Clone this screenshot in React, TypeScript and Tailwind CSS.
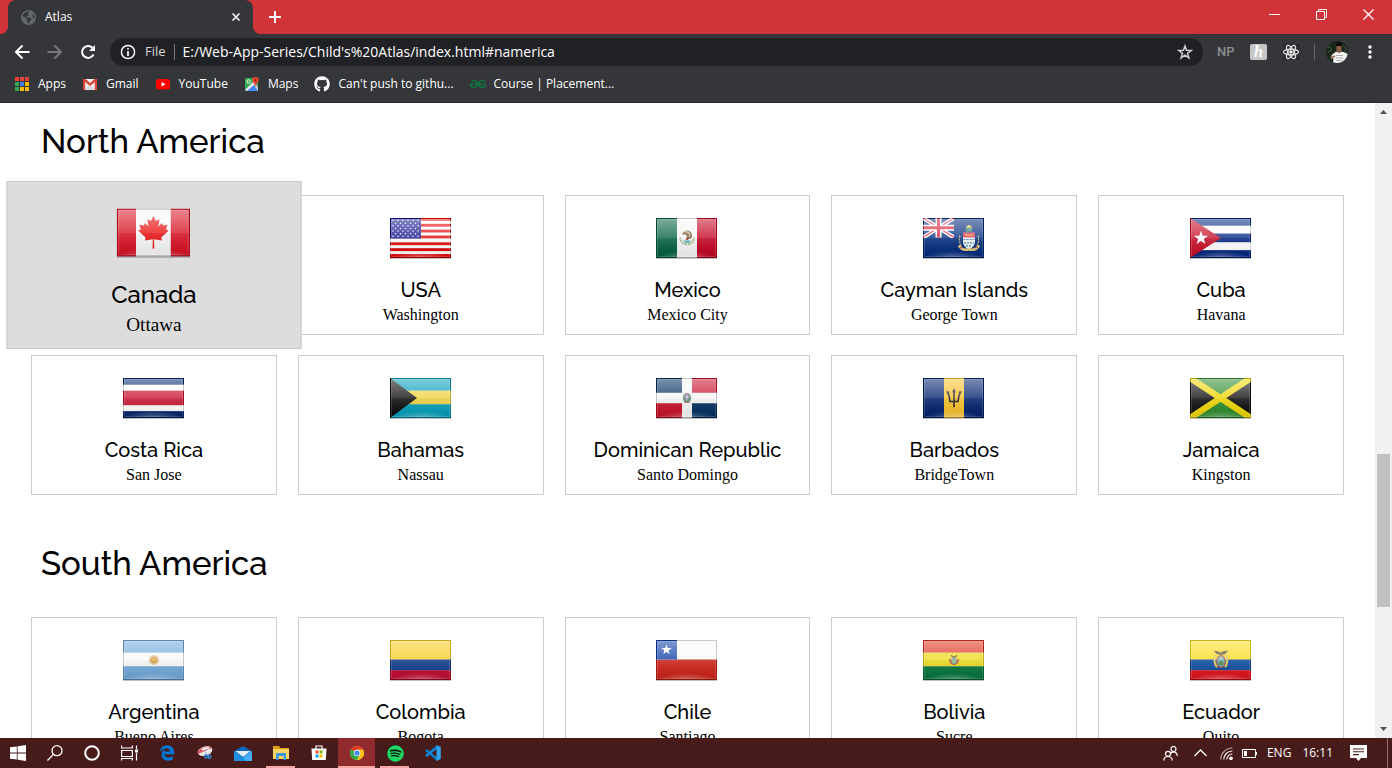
import React, { useId } from "react";
import { FaEarthAmericas, FaEdgeLegacy, FaGithub, FaReact, FaSpotify } from "react-icons/fa6";
import { SiGeeksforgeeks } from "react-icons/si";

const STAR = "M0,-1 L0.235,-0.324 L0.951,-0.309 L0.38,0.124 L0.588,0.809 L0,0.4 L-0.588,0.809 L-0.38,0.124 L-0.951,-0.309 L-0.235,-0.324Z";

function Bands({ colors, heights }: { colors: string[]; heights: number[] }) {
  let y = 0;
  return (
    <>
      {colors.map((c, i) => {
        const top = y;
        y += heights[i];
        return <rect key={i} x="0" y={top} width="61" height={heights[i]} fill={c} />;
      })}
    </>
  );
}

function Columns({ colors, widths }: { colors: string[]; widths: number[] }) {
  let x = 0;
  return (
    <>
      {colors.map((c, i) => {
        const left = x;
        x += widths[i];
        return <rect key={i} x={left} y="0" width={widths[i]} height="41" fill={c} />;
      })}
    </>
  );
}

const flags: Record<string, React.ReactNode> = {
  Canada: (
    <>
      <Columns colors={["#d80f22", "#f7f7f7", "#d80f22"]} widths={[16, 29, 16]} />
      <path
        fill="#ea1111"
        d="M30.5 6.5 L32.6 10.6 L35.6 9.2 L34.6 15.2 L37.6 12.4 L38.4 14.4 L42.2 13.8 L41 17.6 L43.2 19 L37 24.6 L37.6 27.2 L31 26.2 L31.2 34 H29.8 L30 26.2 L23.4 27.2 L24 24.6 L17.8 19 L20 17.6 L18.8 13.8 L22.6 14.4 L23.4 12.4 L26.4 15.2 L25.4 9.2 L28.4 10.6Z"
      />
    </>
  ),
  USA: (
    <>
      <Bands
        colors={["#e60000", "#fff", "#e60000", "#fff", "#e60000", "#fff", "#e60000", "#fff", "#e60000", "#fff", "#e60000", "#fff", "#e60000"]}
        heights={[3, 3, 3, 3, 3, 3, 3, 4, 3, 3, 3, 3, 4]}
      />
      <rect width="31" height="21" fill="#12128f" />
      {[0, 1, 2, 3, 4, 5, 6].map((r) =>
        [0, 1, 2, 3, 4, 5].map((c) =>
          r % 2 === 1 && c === 5 ? null : (
            <circle key={`${r}-${c}`} cx={3 + c * 5 + (r % 2 ? 2.5 : 0)} cy={2.6 + r * 2.7} r="0.75" fill="#fff" />
          ),
        ),
      )}
    </>
  ),
  Mexico: (
    <>
      <Columns colors={["#005f3c", "#f5f5f5", "#c2001f"]} widths={[21, 20, 20]} />
      <path d="M24 20 Q25 27 31 27 Q37 27 38 20" fill="none" stroke="#8ba66a" strokeWidth="1.6" strokeDasharray="1.6 0.7" />
      <path d="M26 17 Q28 12 33 13 Q37 15 36 20 Q33 23 30 21 Q32 18 29 17Z" fill="#7d5a35" />
      <path d="M29 14 Q34 14 34 19" fill="none" stroke="#c9b48c" strokeWidth="1.2" />
      <path d="M27 23 H35 L33 25.5 H29Z" fill="#55b5bd" />
      <circle cx="31" cy="21.5" r="1.2" fill="#b33c2c" />
    </>
  ),
  "Cayman Islands": (
    <>
      <rect width="61" height="41" fill="#00297b" />
      <path d="M0 0 L31 20 M31 0 L0 20" stroke="#fff" strokeWidth="4" />
      <path d="M0 0 L31 20 M31 0 L0 20" stroke="#d8213b" strokeWidth="1.2" />
      <path d="M15.5 0 V20 M0 10 H31" stroke="#fff" strokeWidth="6" />
      <path d="M15.5 0 V20 M0 10 H31" stroke="#d8213b" strokeWidth="3" />
      <rect x="31" width="30" height="41" fill="#00297b" />
      <rect y="20.5" width="32" height="21" fill="#00297b" />
      <path d="M42.5 10 Q46 4.500 49.5 10Z" fill="#f0d25c" />
      <rect x="43" y="10" width="6" height="4" fill="#35846a" />
      <path d="M40 15 H52 V25 Q51 30 46 32 Q41 30 40 25Z" fill="#f4f4f4" />
      <path d="M40 15 H52 V20 H40Z" fill="#d8314a" />
      <path d="M42 17.5 H50" stroke="#f0c842" />
      <path d="M40.500 22 H51.5 M41 25.500 H51 M43 28.5 H49" stroke="#3d84b8" strokeWidth="1.2" strokeDasharray="2 1" />
      <path d="M37 18 Q35.500 24 38 28 M55 18 Q56.500 24 54 28" fill="none" stroke="#d9bd74" strokeWidth="1.200" strokeDasharray="2 1" />
      <path d="M36 28 Q39 34 46 32 Q53 34 56 28" fill="none" stroke="#eacb78" strokeWidth="2.6" />
      <path d="M37 30.500 h3 M52 30.500 h3" stroke="#c53b3b" />
    </>
  ),
  Cuba: (
    <>
      <Bands colors={["#00237f", "#fff", "#00237f", "#fff", "#00237f"]} heights={[8, 8, 9, 8, 8]} />
      <path d="M0 0 L31 20.500 L0 41Z" fill="#c60c26" />
      <path d={STAR} transform="translate(11 20.5) scale(7.5)" fill="#fff" />
    </>
  ),
  "Costa Rica": <Bands colors={["#00246b", "#fff", "#c8102e", "#fff", "#00246b"]} heights={[7, 6, 15, 6, 7]} />,
  Bahamas: (
    <>
      <Bands colors={["#009db8", "#eed13c", "#009db8"]} heights={[13, 14, 14]} />
      <path d="M0 0 L27 20.500 L0 41Z" fill="#0a0a0a" />
    </>
  ),
  "Dominican Republic": (
    <>
      <rect width="61" height="41" fill="#f5f5f5" />
      <path d="M0 0 H26 V15 H0Z M36 26 H61 V41 H36Z" fill="#002d5e" />
      <path d="M36 0 H61 V15 H36Z M0 26 H26 V41 H0Z" fill="#c60c26" />
      <ellipse cx="31" cy="20.5" rx="4.200" ry="5" fill="#5f8a70" />
      <path d="M29 17 h4 v4 q-2 3 -4 0z" fill="#6c6f9c" />
      <path d="M31 17 v6 M29 19.500 h4" stroke="#fff" strokeWidth="0.6" />
      <path d="M28.500 25 h5 M29 16 h4" stroke="#c55" />
    </>
  ),
  Barbados: (
    <>
      <Columns colors={["#00206b", "#f7bf28", "#00206b"]} widths={[21, 20, 20]} />
      <path
        d="M31 12 V30 M24.500 14 Q26.500 18 27 24 H35 Q35.500 18 37.5 14"
        fill="none"
        stroke="#171717"
        strokeWidth="1.6"
      />
      <path d="M31 10.500 L32.800 14.500 H29.200Z M23 13.500 L26.500 14 L25 17Z M39 13.500 L35.5 14 L37 17Z" fill="#171717" />
    </>
  ),
  Jamaica: (
    <>
      <rect width="61" height="41" fill="#0b0b0b" />
      <path d="M0 0 H61 L30.5 20.500Z M0 41 H61 L30.5 20.500Z" fill="#2b8a2b" />
      <path d="M0 0 L61 41 M61 0 L0 41" stroke="#efd600" strokeWidth="6.500" />
    </>
  ),
  Argentina: (
    <>
      <Bands colors={["#6fa7da", "#fafafa", "#6fa7da"]} heights={[13, 14, 14]} />
      <circle cx="31" cy="20.5" r="4.200" fill="none" stroke="#dcae6a" strokeWidth="2" strokeOpacity="0.700" />
      <circle cx="31" cy="20.5" r="3" fill="#e0a83e" stroke="#b98236" strokeWidth="0.6" />
    </>
  ),
  Colombia: <Bands colors={["#f8cb1c", "#0c3a8c", "#c0082d"]} heights={[20, 11, 10]} />,
  Chile: (
    <>
      <Bands colors={["#fafafa", "#cc1f14"]} heights={[20, 21]} />
      <rect width="21" height="20" fill="#0a3ba5" />
      <path d={STAR} transform="translate(10.5 10) scale(5.5)" fill="#fff" />
    </>
  ),
  Bolivia: (
    <>
      <Bands colors={["#dc2b18", "#ecd91c", "#007238"]} heights={[13, 14, 14]} />
      <path d="M26 19 Q26 25.500 31 25.500 Q36 25.500 36 19 L34 20 L31 17.500 L28 20Z" fill="#b84a33" />
      <ellipse cx="31" cy="21.500" rx="2.800" ry="3.200" fill="#6fb0a0" />
      <path d="M28 16 L31 18 L34 16" fill="none" stroke="#4b4236" strokeWidth="1.2" />
      <path d="M29.500 22 h3" stroke="#e0c23c" />
    </>
  ),
  Ecuador: (
    <>
      <Bands colors={["#fbdc16", "#0a4a9c", "#e0101a"]} heights={[20, 11, 10]} />
      <path d="M24 11 Q28 10.500 30.500 13 Q33 10.500 38 11 Q35.500 15.500 31 15 Q26.500 15.500 24 11Z" fill="#4f4334" />
      <path d="M26 15 Q22.500 22 27 28 M36 15 Q39 22 35 28" fill="none" stroke="#dccb5a" strokeWidth="2" />
      <ellipse cx="31" cy="22" rx="4.200" ry="6" fill="#69b7d0" stroke="#b0503c" strokeWidth="1.2" />
      <path d="M28 23 Q31 19 34 23 L33 26 H29Z" fill="#4d8a4c" />
      <circle cx="31" cy="18.500" r="1.100" fill="#f0cf3a" />
    </>
  ),
};

function Flag({ country }: { country: string }) {
  const id = useId();
  return (
    <svg viewBox="-1 -12 64 64" className="mx-auto block size-16" role="img" aria-label={`Flag of ${country}`}>
      <defs>
        <linearGradient id={`${id}g`} x1="0" y1="0" x2="0" y2="1">
          <stop offset="0" stopColor="#fff" stopOpacity="0.48" />
          <stop offset="0.5" stopColor="#fff" stopOpacity="0.22" />
          <stop offset="0.51" stopColor="#ddd" stopOpacity="0.18" />
          <stop offset="0.75" stopColor="#888" stopOpacity="0.1" />
          <stop offset="1" stopColor="#000" stopOpacity="0.1" />
        </linearGradient>
        <radialGradient id={`${id}r`} cx="0.5" cy="1" r="0.5" gradientTransform="translate(0 0.7) scale(1 0.3)">
          <stop offset="0" stopColor="#fff" stopOpacity="0.3" />
          <stop offset="1" stopColor="#fff" stopOpacity="0" />
        </radialGradient>
        <clipPath id={`${id}c`}>
          <rect width="61" height="41" />
        </clipPath>
      </defs>
      <g transform="scale(1 0.9756)">
        <rect x="0" y="1" width="61" height="41" fill="#000" opacity="0.25" />
        <g clipPath={`url(#${id}c)`}>
          {flags[country]}
          <rect x="1" y="1" width="59" height="39" fill={`url(#${id}g)`} />
          <rect x="1" y="1" width="59" height="39" fill={`url(#${id}r)`} />
          <rect x="1.500" y="1.500" width="58" height="38" fill="none" stroke="#fff" strokeOpacity="0.15" />
          <rect x="0.500" y="0.500" width="60" height="40" fill="none" stroke="#000" strokeOpacity="0.2" />
          <rect y="40" width="61" height="1" fill="#000" opacity="0.2" />
        </g>
      </g>
    </svg>
  );
}

const regions = [
  {
    id: "namerica",
    name: "North America",
    countries: [
      ["Canada", "Ottawa"],
      ["USA", "Washington"],
      ["Mexico", "Mexico City"],
      ["Cayman Islands", "George Town"],
      ["Cuba", "Havana"],
      ["Costa Rica", "San Jose"],
      ["Bahamas", "Nassau"],
      ["Dominican Republic", "Santo Domingo"],
      ["Barbados", "BridgeTown"],
      ["Jamaica", "Kingston"],
    ],
  },
  {
    id: "samerica",
    name: "South America",
    countries: [
      ["Argentina", "Bueno Aires"],
      ["Colombia", "Bogota"],
      ["Chile", "Santiago"],
      ["Bolivia", "Sucre"],
      ["Ecuador", "Quito"],
    ],
  },
];

function CountryCard({ name, capital, active }: { name: string; capital: string; active: boolean }) {
  return (
    <article
      className={
        "border border-[#cccccc] pt-[10px] pb-[7px] text-center text-black " +
        (active ? "relative z-10 scale-120 bg-[#dddddd]" : "bg-white")
      }
    >
      <Flag country={name} />
      <h2 className="mt-2 font-['Raleway','Inter',sans-serif] text-xl leading-6 font-medium whitespace-nowrap">{name}</h2>
      <p className="mt-px font-['Liberation_Serif',serif] text-base leading-6">{capital}</p>
    </article>
  );
}

function TabStrip() {
  return (
    <div className="flex h-[34px] items-stretch bg-[#d13438] text-white">
      <span className="w-2 bg-[radial-gradient(circle_at_0_0,transparent_8px,#35363a_8px)] bg-[length:8px_8px] bg-bottom bg-no-repeat" />
      <div className="flex w-[245px] items-center rounded-t-lg bg-[#35363a] pr-[9px] pl-[13px]">
        <FaEarthAmericas className="size-[15px] text-[#63676b]" />
        <span className="ml-[9px] flex-1 text-xs">Atlas</span>
        <button aria-label="Close tab" className="grid size-4 place-items-center">
          <svg viewBox="0 0 8 8" className="size-2" stroke="#fff" strokeWidth="1.500">
            <path d="M0.500 0.500 L7.500 7.500 M7.500 0.500 L0.500 7.500" />
          </svg>
        </button>
      </div>
      <span className="w-2 bg-[radial-gradient(circle_at_100%_0,transparent_8px,#35363a_8px)] bg-[length:8px_8px] bg-bottom bg-no-repeat" />
      <button aria-label="New tab" className="grid w-7 place-items-center">
        <svg viewBox="0 0 12 12" className="size-3" stroke="#fff" strokeWidth="2">
          <path d="M6 0 V12 M0 6 H12" />
        </svg>
      </button>
      <div className="ml-auto flex h-[29px]">
        <button aria-label="Minimize" className="grid w-[47px] place-items-center">
          <svg viewBox="0 0 11 11" className="size-[11px]" stroke="#fff">
            <path d="M0 5.500 H11" />
          </svg>
        </button>
        <button aria-label="Restore" className="grid w-[47px] place-items-center">
          <svg viewBox="0 0 11 11" className="size-[11px]" stroke="#fff" fill="none">
            <path d="M0.500 2.500 H8.500 V10.500 H0.500Z M2.500 2 V0.500 H10.500 V8.500 H9" />
          </svg>
        </button>
        <button aria-label="Close" className="grid w-[47px] place-items-center">
          <svg viewBox="0 0 11 11" className="size-[11px]" stroke="#fff" strokeWidth="1.200">
            <path d="M0.500 0.500 L10.500 10.500 M10.500 0.500 L0.500 10.500" />
          </svg>
        </button>
      </div>
    </div>
  );
}

function Toolbar() {
  return (
    <div className="flex h-9 items-center text-white">
      <button aria-label="Back" className="ml-[14px] grid size-4 place-items-center">
        <svg viewBox="0 0 16 16" className="size-4" fill="none" stroke="#fff" strokeWidth="2">
          <path d="M15.500 8 H2 M8.500 1.500 L2 8 L8.500 14.500" />
        </svg>
      </button>
      <button aria-label="Forward" className="ml-[17px] grid size-4 place-items-center">
        <svg viewBox="0 0 16 16" className="size-4" fill="none" stroke="#77787b" strokeWidth="2">
          <path d="M0.500 8 H14 M7.500 1.500 L14 8 L7.500 14.500" />
        </svg>
      </button>
      <button aria-label="Reload" className="ml-[17px] grid size-4 place-items-center">
        <svg viewBox="0 0 16 16" className="size-4" fill="none" stroke="#fff" strokeWidth="2">
          <path d="M13.500 10.500 A6 6 0 1 1 12.500 3.800" />
          <path d="M15 1 V7 H9Z" fill="#fff" stroke="none" />
        </svg>
      </button>
      <div className="ml-[14px] flex h-7 flex-1 items-center rounded-full bg-[#202124] pr-[10px] pl-[10px]">
        <svg viewBox="0 0 16 16" className="size-4" fill="none" stroke="#fff" strokeWidth="1.500">
          <circle cx="8" cy="8" r="6.600" />
          <path d="M8 7 V12 M8 4 V5.600" strokeWidth="1.700" />
        </svg>
        <label htmlFor="address" className="ml-[9px] text-[13px] text-[#d5d6d8]">File</label>
        <span className="mx-2 h-4 w-px bg-[#77787b]" />
        <input
          id="address"
          className="min-w-0 flex-1 bg-transparent text-sm text-white outline-none"
          defaultValue="E:/Web-App-Series/Child's%20Atlas/index.html#namerica"
        />
        <button aria-label="Bookmark this page">
          <svg viewBox="0 0 16 16" className="size-4" fill="none" stroke="#d0d1d3" strokeWidth="1.500">
            <path d={STAR} transform="translate(8 8.5) scale(6.6)" strokeWidth="0.220" />
          </svg>
        </button>
      </div>
      <button className="ml-[14px] w-[17px] font-['Roboto',sans-serif] text-[13px] font-medium text-[#8d8e90]">NP</button>
      <button aria-label="Honey" className="ml-4 grid h-4 w-[17px] place-items-center rounded-xs bg-[#c6c6c6] font-['Liberation_Serif',serif] text-base leading-none font-bold text-white italic">h</button>
      <button aria-label="React Developer Tools" className="ml-4 grid size-4 place-items-center bg-[#292a2d]">
        <FaReact className="size-4 stroke-white stroke-[14px] text-white" />
      </button>
      <span className="ml-[15px] h-4 w-px bg-[#66676a]" />
      <button aria-label="Profile" className="ml-[11px]">
        <svg viewBox="0 0 22 22" className="size-[22px] rounded-full">
          <rect width="22" height="22" fill="#1a2619" />
          <path d="M1 5 l5 3 M2 11 l4 -2 M17 4 l4 5 M4 16 l3 -4 M18 9 l3 3" stroke="#496245" strokeWidth="1" />
          <path d="M10.500 5 h5 v5 l-2.500 2.500 l-2.500 -2.500z" fill="#8a5d45" />
          <path d="M10 5 Q10 1.500 13 1.500 Q16 1.500 16 5 H10Z" fill="#0c0b0b" />
          <path d="M6 14 L10 10.500 L13 12 L16 10.500 L22 13 L19 22 H7 L7.500 17 L5 18Z" fill="#f4f4f4" />
          <path d="M10 14.500 h7 M9.500 17 h8 M10 19.500 h6" stroke="#a8a8a8" strokeWidth="0.900" />
          <path d="M5 17 l4 -2" stroke="#a06b52" strokeWidth="1.500" />
        </svg>
      </button>
      <button aria-label="Menu" className="mr-[14px] ml-[14px] grid h-4 w-4 place-items-center">
        <svg viewBox="0 0 4 14" className="h-[14px] w-1" fill="#fff">
          <circle cx="2" cy="2" r="1.700" />
          <circle cx="2" cy="7" r="1.700" />
          <circle cx="2" cy="12" r="1.700" />
        </svg>
      </button>
    </div>
  );
}

const bookmarks = [
  {
    label: "Apps",
    icon: (
      <svg viewBox="0 0 16 16" className="size-4">
        {["#ea4335", "#ea4335", "#ea4335", "#34a853", "#4285f4", "#fbbc05", "#34a853", "#fbbc05", "#fbbc05"].map((c, i) => (
          <rect key={i} x={1 + (i % 3) * 5} y={1 + Math.floor(i / 3) * 5} width="4" height="4" fill={c} />
        ))}
      </svg>
    ),
  },
  {
    label: "Gmail",
    icon: (
      <svg viewBox="0 0 16 16" className="size-4">
        <rect x="1" y="3" width="14" height="11" fill="#f1f1f1" />
        <path d="M3 13.500 L8 8.500 L13 13.500Z" fill="#d8d8d8" />
        <path d="M1 3 H3.500 L8 7 L12.500 3 H15 V14 H12.800 V6 L8 10 L3.200 6 V14 H1Z" fill="#db4437" />
      </svg>
    ),
  },
  {
    label: "YouTube",
    icon: (
      <svg viewBox="0 0 16 16" className="size-4">
        <rect x="1" y="3" width="14" height="10.500" rx="2.500" fill="#f00" />
        <path d="M6.500 6 L10.500 8.250 L6.500 10.500Z" fill="#fff" />
      </svg>
    ),
  },
  {
    label: "Maps",
    icon: (
      <svg viewBox="0 0 16 16" className="size-4">
        <rect x="1" y="2" width="13" height="13" rx="1" fill="#34a853" />
        <path d="M2 15 L9 8 L14 13 V15Z" fill="#4285f4" />
        <path d="M1 14 L10 5 L12 7 L3 15Z" fill="#ececec" />
        <path d="M9 8 L11 7 L14 11 V15Z" fill="#c8c8c8" />
        <circle cx="4.500" cy="5.500" r="1.700" fill="none" stroke="#fff" />
        <path d="M11.500 1 A3.200 3.200 0 0 1 14.700 4.300 C14.700 6.500 11.800 7.500 11.500 11 C11.200 7.500 8.300 6.500 8.300 4.300 A3.200 3.200 0 0 1 11.500 1Z" fill="#ea4335" />
        <circle cx="11.500" cy="4.200" r="1.100" fill="#8c1d14" />
      </svg>
    ),
  },
  { label: "Can't push to githu...", icon: <FaGithub className="size-4 text-white" /> },
  { label: "Course | Placement...", icon: <SiGeeksforgeeks className="size-4 text-[#0f7a40]" /> },
];

function Scrollbar() {
  return (
    <div className="flex w-[17px] shrink-0 flex-col items-center bg-[#f1f1f1]" aria-hidden="true">
      <svg viewBox="0 0 17 17" className="size-[17px]" fill="#505050">
        <path d="M5 11 L8.500 7 L12 11Z" />
      </svg>
      <div className="flex-[334]" />
      <div className="h-[153px] w-[13px] bg-[#c1c1c1]" />
      <div className="flex-[114]" />
      <svg viewBox="0 0 17 17" className="size-[17px]" fill="#505050">
        <path d="M5 6 H12 L8.500 10Z" />
      </svg>
    </div>
  );
}

const systemItems = [
  {
    label: "Start",
    icon: (
      <svg viewBox="0 0 16 16" className="size-4" fill="#fff">
        <path d="M0 2.300 L6.800 1.400 V7.600 H0Z M7.600 1.200 L16 0 V7.600 H7.600Z M0 8.400 H6.800 V14.600 L0 13.700Z M7.600 8.400 H16 V16 L7.600 14.800Z" />
      </svg>
    ),
  },
  {
    label: "Search",
    icon: (
      <svg viewBox="0 0 16 16" className="size-4" fill="none" stroke="#fff" strokeWidth="1.300">
        <circle cx="10" cy="5.700" r="5" />
        <path d="M6.400 9.400 L0.500 15.500" />
      </svg>
    ),
  },
  {
    label: "Cortana",
    icon: (
      <svg viewBox="0 0 16 16" className="size-4" fill="none" stroke="#fff" strokeWidth="2">
        <circle cx="8" cy="8" r="6.800" />
      </svg>
    ),
  },
  {
    label: "Task view",
    icon: (
      <svg viewBox="0 0 17 16" className="h-4 w-[17px]" fill="none" stroke="#fff" strokeWidth="1.200">
        <path d="M0.600 0.500 V3 H11.400 V0.500 M0.600 5.500 H11.400 V11.500 H0.600Z M0.600 15.500 V13.500 H11.400 V15.500 M15.500 0.500 V4 M15.500 8 V15.500" />
        <rect x="14" y="4.500" width="3" height="3" fill="#fff" stroke="none" />
      </svg>
    ),
  },
];

const appItems = [
  { label: "Edge", state: "", icon: <FaEdgeLegacy className="size-4 text-[#0078d7]" /> },
  {
    label: "Snip & Sketch",
    state: "",
    icon: (
      <svg viewBox="0 0 17 16" className="h-4 w-[17px]">
        <ellipse cx="9" cy="6" rx="7.500" ry="4.600" transform="rotate(-18 9 6)" fill="#e9e9e9" />
        <path d="M2 9 Q1 5 6 3 Q12 0 16 3 L9 6Z" fill="#d64045" opacity="0.850" />
        <path d="M6 5 Q9 2.500 13 3.500" stroke="#fff" strokeWidth="2" fill="none" />
        <path d="M9 7 L13 13 M15 8 L8 11" stroke="#b7c4cf" strokeWidth="1.200" />
        <circle cx="10" cy="11.500" r="1.500" fill="none" stroke="#2e86d1" strokeWidth="1.300" />
        <circle cx="13.500" cy="12" r="1.500" fill="none" stroke="#2e86d1" strokeWidth="1.300" />
      </svg>
    ),
  },
  {
    label: "Mail",
    state: "",
    icon: (
      <svg viewBox="0 0 18 15" className="h-[15px] w-[18px]">
        <path d="M0 5 L9 0 L18 5 V15 H0Z" fill="#0a64b4" />
        <path d="M1.500 5 H16.500 L9 11Z" fill="#e6eff7" />
        <path d="M0 5 L11 12 L18 15 H0Z" fill="#1e8fe0" />
        <path d="M18 5 L9 11 L12 15 H18Z" fill="#45aef0" />
      </svg>
    ),
  },
  {
    label: "File Explorer",
    state: "open",
    icon: (
      <svg viewBox="0 0 16 14" className="h-[14px] w-4">
        <path d="M0 0 H6 L7.500 2 H16 V13 H0Z" fill="#d99f14" />
        <path d="M0 3 H16 V13 H0Z" fill="#fcd462" />
        <path d="M3 7 H13 V14 H10.500 V10 H5.500 V14 H3Z" fill="#3a95de" />
      </svg>
    ),
  },
  {
    label: "Microsoft Store",
    state: "",
    icon: (
      <svg viewBox="0 0 16 16" className="size-4">
        <path d="M5 4 V1 H11 V4" fill="none" stroke="#fff" strokeWidth="1.200" />
        <path d="M0.500 3.500 H15.500 L14.800 15 H1.200Z" fill="#fff" />
        <path d="M4.500 5.500 H7.500 V8.500 H4.500Z" fill="#f25022" />
        <path d="M8.500 5.500 H11.500 V8.500 H8.500Z" fill="#7fba00" />
        <path d="M4.500 9.500 H7.500 V12.500 H4.500Z" fill="#00a4ef" />
        <path d="M8.500 9.500 H11.500 V12.500 H8.500Z" fill="#ffb900" />
      </svg>
    ),
  },
  {
    label: "Chrome",
    state: "active",
    icon: (
      <svg viewBox="0 0 14 14" className="size-[14px]">
        <circle cx="7" cy="7" r="7" fill="#fbc116" />
        <path d="M7 7 L0.950 3.500 A7 7 0 0 1 13.050 3.500Z" fill="#e33b2e" />
        <path d="M0.950 3.500 A7 7 0 0 0 7 14 L9.800 8.500 L7 7Z" fill="#2da94f" />
        <path d="M7 3.500 H13.050 A7 7 0 0 1 7 14 L10 8.500Z" fill="#fbc116" />
        <circle cx="7" cy="7" r="3.300" fill="#fff" />
        <circle cx="7" cy="7" r="2.600" fill="#4285f4" />
      </svg>
    ),
  },
  {
    label: "Spotify",
    state: "open",
    icon: (
      <span className="grid size-4 place-items-center rounded-full bg-[#111111]">
        <FaSpotify className="size-[17px] text-[#1ed760]" />
      </span>
    ),
  },
  {
    label: "Visual Studio Code",
    state: "",
    icon: (
      <svg viewBox="0 0 16 16" className="size-4">
        <path d="M0.500 5 L2 4 L12 12.500 V16 L0.500 6.200Z" fill="#0a7bc7" />
        <path d="M0.500 11 L2 12 L12 3.800 V0.200 L0.500 9.800Z" fill="#1283d0" />
        <path d="M11.500 0 L15.800 2 V14 L11.500 16Z" fill="#2ea3ee" />
      </svg>
    ),
  },
];

function Taskbar() {
  return (
    <footer className="flex h-[30px] shrink-0 bg-[#481b1b] text-xs text-white">
      <nav aria-label="System" className="flex">
        {systemItems.map((item) => (
          <button key={item.label} aria-label={item.label} className="grid w-[37px] place-items-center pr-px">
            {item.icon}
          </button>
        ))}
      </nav>
      <nav aria-label="Applications" className="flex gap-px">
        {appItems.map((item) => (
          <button
            key={item.label}
            aria-label={item.label}
            className={
              "flex w-[37px] flex-col items-center " + (item.state === "active" ? "bg-[#8f2a2d]" : "")
            }
          >
            <span className="grid flex-1 place-items-center">{item.icon}</span>
            {item.state === "active" && <span className="-mt-0.5 h-0.5 w-full bg-[#f7a5a5]" />}
            {item.state === "open" && <span className="-mt-0.5 h-0.5 w-[29px] bg-[#f7a5a5]" />}
          </button>
        ))}
      </nav>
      <div className="ml-auto flex items-center border-r border-[#8d6f6f] pr-5">
        <button aria-label="People">
          <svg viewBox="0 0 15 15" className="size-[15px]" fill="none" stroke="#fff" strokeWidth="1.200">
            <circle cx="10.500" cy="3" r="2.500" />
            <path d="M7.500 8.500 Q8 5.800 10.500 5.800 Q14 6 14.300 10" />
            <circle cx="5" cy="7.800" r="2.500" />
            <path d="M0.700 14.500 Q1 10.500 5 10.500 Q9 10.500 9.300 14.500" />
          </svg>
        </button>
        <button aria-label="Show hidden icons" className="ml-4">
          <svg viewBox="0 0 13 8" className="h-2 w-[13px]" fill="none" stroke="#fff" strokeWidth="1.300">
            <path d="M0.500 7 L6.500 1 L12.500 7" />
          </svg>
        </button>
        <button aria-label="Network" className="ml-[13px]">
          <svg viewBox="0 0 13 13" className="size-[13px]" fill="none" stroke="#fff" strokeWidth="1.100">
            <path d="M0.800 12.500 A11.500 11.500 0 0 1 12.300 1" opacity="0.650" />
            <path d="M3.800 12.500 A8.500 8.500 0 0 1 12.300 4" />
            <path d="M6.800 12.500 A5.500 5.500 0 0 1 12.300 7" />
            <circle cx="11" cy="11.300" r="1.300" fill="#fff" />
          </svg>
        </button>
        <button aria-label="Battery" className="ml-[9px]">
          <svg viewBox="0 0 15 9" className="h-[9px] w-[15px]" fill="none" stroke="#fff">
            <path d="M0.500 0.500 H13.500 V8.500 H0.500Z" />
            <path d="M14.500 3 V6" />
            <rect x="2" y="2" width="3" height="5" fill="#fff" stroke="none" />
          </svg>
        </button>
        <span className="ml-[10px]">ENG</span>
        <time className="ml-[11px]">16:11</time>
        <button aria-label="Notifications" className="ml-[17px]">
          <svg viewBox="0 0 17 16" className="h-4 w-[17px]">
            <path d="M0 0 H17 V13 H11 L8.500 16 L6 13 H0Z" fill="#fff" />
            <path d="M3 4 H14 M3 6.800 H14 M3 9.600 H9" stroke="#481b1b" strokeWidth="1.100" />
          </svg>
        </button>
      </div>
      <span className="w-1" />
    </footer>
  );
}

export default function App() {
  return (
    <div className="flex h-screen flex-col overflow-hidden bg-white font-['Segoe_UI','Open_Sans',sans-serif]">
      <header className="shrink-0 bg-[#35363a]">
        <TabStrip />
        <Toolbar />
        <nav aria-label="Bookmarks" className="flex h-[33px] items-center gap-4 border-b border-[#28292b] px-[14px] pb-1">
          {bookmarks.map((b) => (
            <a key={b.label} href="#" className="flex items-center gap-2 text-xs text-white">
              {b.icon}
              {b.label}
            </a>
          ))}
        </nav>
      </header>
      <div className="flex min-h-0 flex-1">
        <main className="flex min-w-0 flex-1 flex-col gap-[49px] overflow-hidden px-[31px] pt-[19px]">
          {regions.map((region) => (
            <section key={region.id} id={region.id} className="shrink-0">
              <h1 className="mb-[33px] pl-[10px] font-['Raleway','Inter',sans-serif] text-[33px] leading-10 font-medium text-black">
                {region.name}
              </h1>
              <div className="grid grid-cols-5 gap-x-[21px] gap-y-5">
                {region.countries.map(([name, capital]) => (
                  <CountryCard key={name} name={name} capital={capital} active={name === "Canada"} />
                ))}
              </div>
            </section>
          ))}
        </main>
        <Scrollbar />
      </div>
      <Taskbar />
    </div>
  );
}
